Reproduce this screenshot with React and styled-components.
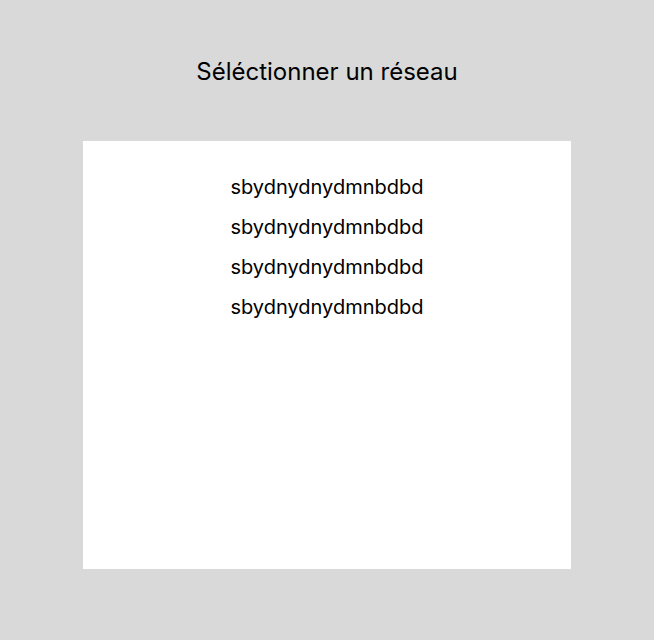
import React from "react";
import styled, { createGlobalStyle } from "styled-components";

const GlobalStyle = createGlobalStyle`
  *, *::before, *::after {
    box-sizing: border-box;
  }
  body {
    margin: 0;
    background: #d9d9d9;
    color: #000;
    font-family: Inter, sans-serif;
  }
`;

const Page = styled.main`
  display: flex;
  flex-direction: column;
  align-items: center;
  gap: 54px;
  min-height: 100vh;
  padding: 57px 83px 71px;
`;

const Title = styled.h1`
  margin: 0;
  font-size: 24px;
  line-height: 30px;
  font-weight: 400;
  text-align: center;
`;

const NetworkPanel = styled.section`
  flex: 1;
  width: 100%;
  padding: 26px 24px;
  background: #fff;
`;

const NetworkList = styled.ul`
  display: flex;
  flex-direction: column;
  align-items: center;
  margin: 0;
  padding: 0;
  list-style: none;
`;

const NetworkButton = styled.button`
  display: block;
  padding: 8px 0;
  border: 0;
  background: none;
  color: inherit;
  font: inherit;
  font-size: 20px;
  line-height: 24px;
  cursor: pointer;
`;

const networks = [
  { id: 1, name: "sbydnydnydmnbdbd" },
  { id: 2, name: "sbydnydnydmnbdbd" },
  { id: 3, name: "sbydnydnydmnbdbd" },
  { id: 4, name: "sbydnydnydmnbdbd" },
];

export default function App() {
  return (
    <>
      <GlobalStyle />
      <Page>
        <Title id="network-title">Séléctionner un réseau</Title>
        <NetworkPanel aria-labelledby="network-title">
          <NetworkList>
            {networks.map((network) => (
              <li key={network.id}>
                <NetworkButton type="button">{network.name}</NetworkButton>
              </li>
            ))}
          </NetworkList>
        </NetworkPanel>
      </Page>
    </>
  );
}
